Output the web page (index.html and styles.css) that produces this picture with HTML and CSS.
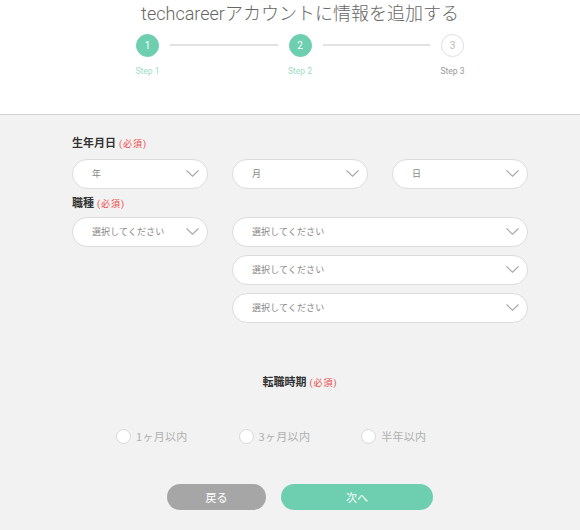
FILE: index.html
```html
<!DOCTYPE html>
<html lang="ja">
<head>
<meta charset="utf-8">
<title>techcareer</title>
<link rel="stylesheet" href="styles.css">
</head>
<body>
<header class="header">
  <div class="wrap">
    <h1 class="title">techcareerアカウントに情報を追加する</h1>
    <div class="steps">
      <div class="step done"><span class="circle">1</span><span class="step-label">Step 1</span></div>
      <div class="line"></div>
      <div class="step done"><span class="circle">2</span><span class="step-label">Step 2</span></div>
      <div class="line"></div>
      <div class="step"><span class="circle">3</span><span class="step-label">Step 3</span></div>
    </div>
  </div>
</header>
<main class="wrap form">
  <div class="label label-birth">生年月日<span class="req">(必須)</span></div>
  <div class="grid">
    <div class="select"><span>年</span><svg class="chev" viewBox="0 0 13 7"><path d="M0.5 0.5 L6.5 6.2 L12.5 0.5"/></svg></div>
    <div class="select"><span>月</span><svg class="chev" viewBox="0 0 13 7"><path d="M0.5 0.5 L6.5 6.2 L12.5 0.5"/></svg></div>
    <div class="select"><span>日</span><svg class="chev" viewBox="0 0 13 7"><path d="M0.5 0.5 L6.5 6.2 L12.5 0.5"/></svg></div>
  </div>
  <div class="label label-job">職種<span class="req">(必須)</span></div>
  <div class="grid job">
    <div class="select"><span>選択してください</span><svg class="chev" viewBox="0 0 13 7"><path d="M0.5 0.5 L6.5 6.2 L12.5 0.5"/></svg></div>
    <div class="stack">
      <div class="select"><span>選択してください</span><svg class="chev" viewBox="0 0 13 7"><path d="M0.5 0.5 L6.5 6.2 L12.5 0.5"/></svg></div>
      <div class="select"><span>選択してください</span><svg class="chev" viewBox="0 0 13 7"><path d="M0.5 0.5 L6.5 6.2 L12.5 0.5"/></svg></div>
      <div class="select"><span>選択してください</span><svg class="chev" viewBox="0 0 13 7"><path d="M0.5 0.5 L6.5 6.2 L12.5 0.5"/></svg></div>
    </div>
  </div>
  <div class="label label-center">転職時期<span class="req">(必須)</span></div>
  <div class="radios">
    <label class="radio"><span class="dot"></span>1ヶ月以内</label>
    <label class="radio"><span class="dot"></span>3ヶ月以内</label>
    <label class="radio"><span class="dot"></span>半年以内</label>
  </div>
  <div class="buttons">
    <button class="btn back">戻る</button>
    <button class="btn next">次へ</button>
  </div>
</main>
</body>
</html>
```
FILE: styles.css
```css
* { box-sizing: border-box; }
html, body { margin: 0; padding: 0; }
body {
  background: #f2f2f2;
  font-family: Roboto, "Noto Sans CJK JP", sans-serif;
  color: #333;
  width: 580px;
  height: 530px;
  overflow: hidden;
}
.wrap {
  width: 456px;
  margin-left: 72px;
}
.header {
  background: #fff;
  height: 115px;
  border-bottom: 1px solid #d2d2d2;
}
.title {
  margin: 0;
  font-size: 18px;
  line-height: 28px;
  font-weight: 300;
  color: #666;
  text-align: center;
  white-space: nowrap;
  letter-spacing: 0;
}
.steps {
  display: flex;
  align-items: flex-start;
  width: 328px;
  margin: 6px 0 0 64px;
}
.step {
  width: 23px;
  display: flex;
  flex-direction: column;
  align-items: center;
}
.circle {
  width: 23px;
  height: 23px;
  border-radius: 50%;
  border: 1px solid #dedede;
  background: #fff;
  color: #bbb;
  font-size: 10px;
  display: flex;
  align-items: center;
  justify-content: center;
}
.step.done .circle {
  background: #6dcfaf;
  border-color: #6dcfaf;
  color: #fff;
}
.step-label {
  margin-top: 8px;
  font-size: 8.5px;
  line-height: 12px;
  font-weight: 400;
  white-space: nowrap;
  color: #999;
}
.step.done .step-label { color: #9ddcc6; }
.line {
  flex: 1;
  height: 2px;
  background: #e2e2e2;
  margin: 10px 11px 0;
}
.form { padding-top: 21px; }
.label {
  font-size: 11px;
  line-height: 16px;
  font-weight: 700;
  color: #333;
}
.req {
  font-size: 9px;
  font-weight: 400;
  color: #f04848;
  margin-left: 3px;
  letter-spacing: 1px;
}
.label-birth { margin-bottom: 7px; }
.label-job { margin: 7px 0 5px; }
.label-center { text-align: center; margin-top: 52px; }
.grid {
  display: grid;
  grid-template-columns: 1fr 1fr 1fr;
  column-gap: 24px;
}
.grid.job { align-items: start; }
.stack {
  grid-column: span 2;
  display: flex;
  flex-direction: column;
  gap: 8px;
}
.select {
  height: 30px;
  background: #fff;
  border: 1px solid #dcdcdc;
  border-radius: 15px;
  display: flex;
  align-items: center;
  justify-content: space-between;
  padding: 0 8px 1px 19px;
  font-family: "Noto Sans CJK JP", sans-serif;
  font-size: 9px;
  color: #888;
  letter-spacing: 0.1px;
}
.chev {
  width: 13px;
  height: 7px;
  fill: none;
  stroke: #a8a8a8;
  stroke-width: 1.1;
}
.radios {
  display: flex;
  gap: 51px;
  margin: 37px 0 0 44px;
}
.radio {
  display: flex;
  align-items: center;
  gap: 5px;
  font-family: "Noto Sans CJK JP", sans-serif;
  font-size: 11px;
  line-height: 16px;
  color: #b0b0b0;
  letter-spacing: 0.3px;
}
.dot {
  width: 15px;
  height: 15px;
  border-radius: 50%;
  background: #fff;
  border: 1px solid #d8d8d8;
}
.buttons {
  display: flex;
  justify-content: center;
  gap: 15px;
  margin-top: 40px;
}
.btn {
  height: 26px;
  border: none;
  border-radius: 13px;
  color: #fff;
  font-family: "Noto Sans CJK JP", sans-serif;
  font-size: 11px;
  padding: 0;
}
.back { width: 99px; background: #a6a6a6; }
.next { width: 152px; background: #6dcfaf; }
```
